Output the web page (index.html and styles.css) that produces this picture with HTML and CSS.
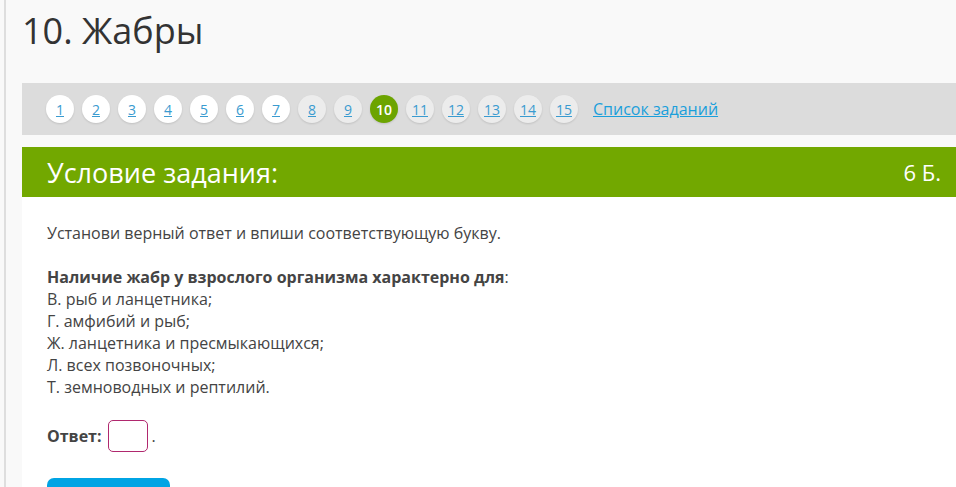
FILE: index.html
```html
<!DOCTYPE html>
<html lang="ru">
<head>
    <meta charset="UTF-8">
    <title>10. Жабры</title>
    <link rel="stylesheet" href="styles.css">
</head>
<body>
    <div class="page">
        <h1 class="title">10. Жабры</h1>

        <div class="tasks">
            <a class="num" href="#">1</a>
            <a class="num" href="#">2</a>
            <a class="num" href="#">3</a>
            <a class="num" href="#">4</a>
            <a class="num" href="#">5</a>
            <a class="num" href="#">6</a>
            <a class="num" href="#">7</a>
            <a class="num grey" href="#">8</a>
            <a class="num grey" href="#">9</a>
            <span class="num active">10</span>
            <a class="num grey" href="#">11</a>
            <a class="num grey" href="#">12</a>
            <a class="num grey" href="#">13</a>
            <a class="num grey" href="#">14</a>
            <a class="num grey" href="#">15</a>
            <a class="list-link" href="#">Список заданий</a>
        </div>

        <div class="card">
            <div class="card-head">
                <span>Условие задания:</span>
                <span class="points">6 Б.</span>
            </div>
            <div class="card-body">
                <p>Установи верный ответ и впиши соответствующую букву.</p>
                <p>
                    <b>Наличие жабр у взрослого организма характерно для</b>:<br>
                    В. рыб и ланцетника;<br>
                    Г. амфибий и рыб;<br>
                    Ж. ланцетника и пресмыкающихся;<br>
                    Л. всех позвоночных;<br>
                    Т. земноводных и рептилий.
                </p>
                <div class="answer">
                    <b>Ответ:</b>
                    <input type="text" class="answer-box">
                    <span>.</span>
                </div>
                <button class="check">Проверить</button>
            </div>
        </div>
    </div>
</body>
</html>
```

FILE: styles.css
```css
body {
    margin: 0;
    background: #f9f9f9;
    font-family: "Open Sans", "DejaVu Sans", sans-serif;
    color: #444;
}
.page {
    margin-left: 4px;
    border-left: 2px solid #dedede;
    padding-left: 16px;
    min-height: 487px;
}
.title {
    margin: 0;
    padding-top: 6px;
    font-size: 36px;
    font-weight: 400;
    line-height: 50px;
    color: #333;
}
.tasks {
    margin-top: 27px;
    background: #dcdcdc;
    height: 52px;
    display: flex;
    align-items: center;
    gap: 8px;
    padding-left: 24px;
}
.num {
    width: 28px;
    height: 28px;
    border-radius: 50%;
    background: #fff;
    box-shadow: 0 1px 2px rgba(0,0,0,0.12);
    display: flex;
    align-items: center;
    justify-content: center;
    font-size: 14px;
    color: #3a9bd0;
}
.num.grey { background: #ececec; }
.num.active {
    background: #6ca400;
    color: #fff;
    font-weight: 600;
}
.list-link {
    margin-left: 7px;
    font-size: 16px;
    color: #1a9fdb;
}
.card {
    margin-top: 12px;
    background: #fff;
}
.card-head {
    background: #72a800;
    height: 50px;
    color: #fff;
    display: flex;
    align-items: center;
    justify-content: space-between;
    padding: 0 15px 0 25px;
    font-size: 27px;
}
.card-head .points { font-size: 22px; }
.card-body {
    padding: 25px 25px 30px;
    font-size: 16px;
    line-height: 22px;
}
.card-body p { margin: 0 0 22px; }
.answer {
    display: flex;
    align-items: center;
    gap: 6px;
}
.answer .answer-box {
    width: 40px;
    height: 32px;
    box-sizing: border-box;
    border: 1px solid #b0286e;
    border-radius: 5px;
    margin: 0;
}
.answer span { margin-left: -2px; }
.check {
    margin-top: 26px;
    width: 123px;
    height: 54px;
    border: none;
    border-radius: 7px;
    background: #00a4e4;
    color: #fff;
    font-family: inherit;
    font-size: 16px;
}
```
